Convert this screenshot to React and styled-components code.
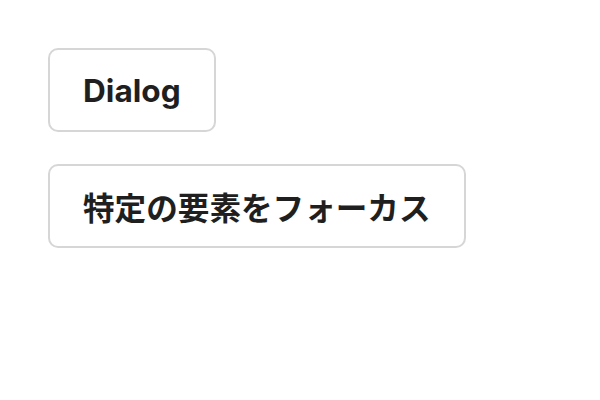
import styled, { createGlobalStyle } from 'styled-components'

const GlobalStyle = createGlobalStyle`
	body {
		margin: 0;
		background: #ffffff;
		font-family: Inter, "Noto Sans CJK JP", sans-serif;
	}
`

const Page = styled.div`
	display: flex;
	flex-direction: column;
	align-items: flex-start;
	gap: 32px;
	padding: 48px;
`

const Button = styled.button`
	box-sizing: border-box;
	height: 84px;
	padding: 0 33px;
	border: 2px solid #d6d6d6;
	border-radius: 10px;
	background: #ffffff;
	color: #1f1f1f;
	font-family: Inter, "Noto Sans CJK JP", sans-serif;
	font-size: 31.6px;
	font-weight: 700;
	cursor: pointer;
`

export default function App() {
	return (
		<>
			<GlobalStyle />
			<Page>
				<Button>Dialog</Button>
				<Button>特定の要素をフォーカス</Button>
			</Page>
		</>
	)
}
